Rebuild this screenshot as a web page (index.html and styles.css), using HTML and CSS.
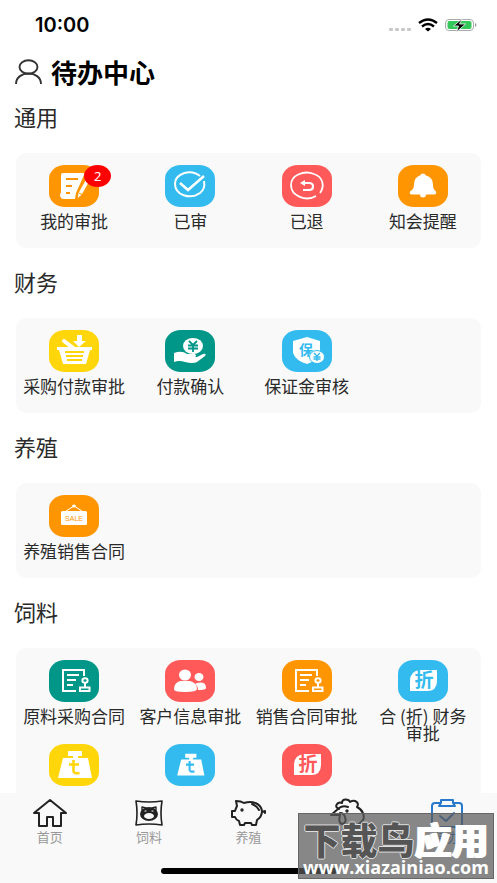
FILE: index.html
```html
<!DOCTYPE html>
<html lang="zh-CN">
<head>
<meta charset="utf-8">
<meta name="viewport" content="width=device-width, initial-scale=1">
<title>待办中心</title>
<link rel="stylesheet" href="styles.css">
</head>
<body>
<svg class="sprite" aria-hidden="true">
  <symbol id="contract" viewBox="0 0 50 42">
    <path d="M27 31H14V10h21v6M18 15h12M18 20h9M18 25h6" fill="none" stroke="#fff" stroke-width="2"/>
    <ellipse cx="36" cy="20.500" rx="2.600" ry="2.300" fill="none" stroke="#fff" stroke-width="2"/>
    <path d="M36 23v4M31 27.500h9.500V31H31z" fill="none" stroke="#fff" stroke-width="2"/>
  </symbol>
  <symbol id="weight" viewBox="0 0 50 42">
    <path d="M19 7h14v5h-4v2h10l4 20H9l5-20h10v-2h-5z" fill="#fff"/>
    <path d="M24.500 16v11q0 3 6 2M20 20.500h10" fill="none" stroke="currentColor" stroke-width="2.600"/>
  </symbol>
  <symbol id="leaf" viewBox="0 0 50 42">
    <path d="M39 10v11q0 10-10 10H12V21q0-10 10-11z" fill="#fff"/>
    <text x="26" y="27" text-anchor="middle" font-size="19" font-weight="700" fill="currentColor">折</text>
  </symbol>
</svg>
<div class="app">
  <header class="status">
    <time>10:00</time>
    <svg width="90" height="20" viewBox="0 0 90 20" role="img" aria-label="信号与电量">
      <g fill="#c8c8c8"><rect x="0" y="13" width="4" height="3" rx="1"/><rect x="6" y="13" width="4" height="3" rx="1"/><rect x="12" y="13" width="4" height="3" rx="1"/><rect x="18" y="13" width="4" height="3" rx="1"/></g>
      <g fill="none" stroke="#000" stroke-width="2.400"><path d="M30 8q9-7 18 0M33 11.500q6-5 12 0"/></g>
      <path d="M36 14q3-2.500 6 0l-3 2.500z"/>
      <rect x="56.500" y="4.500" width="28" height="11" rx="3.500" fill="#fff" stroke="#aaa"/>
      <rect x="58.500" y="6" width="24" height="8" rx="2" fill="#34c759"/>
      <path d="M86 8q3 2 0 4z" fill="#999"/>
      <path d="m73.500 3.500-9 7.500h5l-2 6 9-8h-6z" stroke="#fff" stroke-width=".8"/>
    </svg>
  </header>
  <main>
    <div class="title">
      <svg width="28" height="26" viewBox="0 0 28 26" fill="none" stroke="#333" stroke-width="1.900" aria-hidden="true"><ellipse cx="13.500" cy="8" rx="9" ry="6.800"/><path d="M1 25C1 11 26 11 26 25"/></svg>
      <h1>待办中心</h1>
    </div>

    <h2>通用</h2>
    <section class="card">
      <a class="item" href="#"><span class="tile orange"><svg viewBox="0 0 50 42"><path d="M14 8h20q2 0 1 2l-8 18-1 6H14q-3-1-3-4l1-3V10q0-2 2-2z" fill="#fff"/><path d="M17 14h12M17 21h6M17 28h4" stroke="#ff9500" stroke-width="2.200"/><path d="m38 12 4 2-9 16-5 4 1-6z" fill="#fff" stroke="#ff9500"/><path d="m30 28 4 2" stroke="#ff9500"/></svg><b class="badge">2</b></span><span>我的审批</span></a>
      <a class="item" href="#"><span class="tile blue"><svg viewBox="0 0 50 42" fill="none" stroke="#fff" stroke-width="2"><path d="M35 11C25 3 10 9 10 19c0 11 15 16 25 9 4-3 5-7 4-12"/><path d="m15 18 8 7 16-14" stroke-width="2.500"/></svg></span><span>已审</span></a>
      <a class="item" href="#"><span class="tile red"><svg viewBox="0 0 50 42" fill="none" stroke="#fff" stroke-width="1.800"><path d="M34 31C24 37 9 31 9 20 9 10 22 5 32 9c9 3 11 12 6 19"/><path d="M20 18h7q4 0 4 3.500t-4 3.500h-6" stroke-width="2.200"/><path d="m18 18 5-3v6z" fill="#fff" stroke="none"/></svg></span><span>已退</span></a>
      <a class="item" href="#"><span class="tile orange"><svg viewBox="0 0 50 42" fill="#fff"><path d="M25 8.500q2 0 3 2 7 2 7 9 0 5 3 7 1 3-2 3h-8q0 3-3 3t-3-3h-8q-3 0-2-3 4-2 4-7 0-7 6-9 1-2 3-2z"/></svg></span><span>知会提醒</span></a>
    </section>

    <h2>财务</h2>
    <section class="card">
      <a class="item" href="#"><span class="tile yellow"><svg viewBox="0 0 50 42"><path d="M8 17h35v3h-2l-4 14H14l-4-14H8z" fill="#fff"/><path d="m15 11 12 9" stroke="#fff" stroke-width="4" stroke-linecap="round"/><path d="M28 5h5v6h4l-7 6-6-6h4z" fill="#fff"/><path d="M16 22h19M17 26h17M18 30h15" stroke="#ffd60a" stroke-width="1.800"/></svg></span><span>采购付款审批</span></a>
      <a class="item" href="#"><span class="tile green"><svg viewBox="0 0 50 42"><ellipse cx="28" cy="16" rx="10" ry="8" fill="#fff"/><path d="m24 11 4 4 4-4M23 15.500h10M23 18.500h10M28 15v7" fill="none" stroke="#009688" stroke-width="1.800"/><path d="M9 23q8-3 13 1h8q2 2 0 3h-7 9l6-3q4-1 2 2l-8 6q-4 2-12 0-6-2-11 0z" fill="#fff"/></svg></span><span>付款确认</span></a>
      <a class="item" href="#"><span class="tile blue"><svg viewBox="0 0 50 42"><path d="m25 7 13 4v12q-3 8-13 11-11-3-14-11V11z" fill="#fff"/><text x="24" y="25" text-anchor="middle" font-size="14" font-weight="700" fill="#33bbef">保</text><ellipse cx="35" cy="27" rx="7.500" ry="6.500" fill="#fff" stroke="#33bbef"/><path d="m32 23 3 3 3-3M31.500 27h7M31.500 29h7M35 26v5" fill="none" stroke="#33bbef" stroke-width="1.400"/></svg></span><span>保证金审核</span></a>
    </section>

    <h2>养殖</h2>
    <section class="card">
      <a class="item" href="#"><span class="tile orange"><svg viewBox="0 0 50 42"><rect x="12" y="16" width="26" height="14" rx="1.500" fill="#fff"/><path d="m17 16 8-5 8 5" fill="none" stroke="#fff"/><ellipse cx="25" cy="11" rx="2" ry="1.500" fill="#fff"/><text class="latin" x="25" y="26" text-anchor="middle" font-size="7" fill="#ff9500">SALE</text></svg></span><span>养殖销售合同</span></a>
    </section>

    <h2>饲料</h2>
    <section class="card">
      <a class="item" href="#"><span class="tile green"><svg><use href="#contract"/></svg></span><span>原料采购合同</span></a>
      <a class="item" href="#"><span class="tile red"><svg viewBox="0 0 50 42" fill="#fff"><ellipse cx="34" cy="17" rx="4.500" ry="4"/><path d="M32 23q9-2 9 5 0 2-8 2 0-4-3-6z"/><ellipse cx="20" cy="15" rx="6" ry="5.500"/><path d="M15 21h10q7 2 7 8 0 3-12 3T9 29q0-6 6-8z"/></svg></span><span>客户信息审批</span></a>
      <a class="item" href="#"><span class="tile orange"><svg><use href="#contract"/></svg></span><span>销售合同审批</span></a>
      <a class="item" href="#"><span class="tile blue"><svg><use href="#leaf"/></svg></span><span>合 (折) 财务<br>审批</span></a>
      <a class="item" href="#"><span class="tile yellow"><svg><use href="#weight"/></svg></span></a>
      <a class="item" href="#"><span class="tile blue small"><svg><use href="#weight"/></svg></span></a>
      <a class="item" href="#"><span class="tile red"><svg><use href="#leaf"/></svg></span></a>
    </section>
  </main>
  <nav class="tabs">
    <a href="#"><svg viewBox="0 0 36 30"><path d="M2 15 18 2l16 13h-5v13h-8v-9h-6v9H7V15z"/></svg><span>首页</span></a>
    <a href="#"><svg viewBox="0 0 36 30"><path d="M5 3q13 2 26 0-2 12 0 24-13-2-26 0 2-12 0-24z" stroke-width="1.600"/><ellipse cx="18" cy="16" rx="8" ry="6" fill="#222"/><path d="M11 12V9l4 1M25 12V9l-4 1" stroke-width="1.400"/><ellipse cx="18" cy="18" rx="5" ry="3" fill="#f9f9f9" stroke="none"/><path d="M14 13h1M21 13h1" stroke="#fff" stroke-width="1.200"/></svg><span>饲料</span></a>
    <a href="#"><svg viewBox="0 0 36 30"><path d="M7 8 6 3q5 0 8 2c9-3 17 1 18 8 0 4-2 7-5 9l-1 5h-4l-1-2h-6l-1 2h-4l-1-4q-3-1-4-4H2v-6h3q1-3 2-5zM22 6q5 2 7 6M32 14l3-1v2"/><circle cx="12" cy="12" r=".7" fill="#222"/></svg><span>养殖</span></a>
    <a href="#" aria-label="禽类"><svg viewBox="0 0 36 30"><path d="M9 11C3 9 8 3 12 5c0-5 7-4 8-1 5-3 10 1 7 5 6 3 8 9 6 13q-2 3-7 6M8 11l-7 6h9M9 10q4-3 9-1M10 17q-2 8 2 9 5-1 3-7-1-4-5-4"/><circle cx="17" cy="13" r=".7" fill="#222"/></svg></a>
    <a class="active" href="#"><svg viewBox="0 0 36 30"><path d="M11 5H6q-3 0-3 3v18q0 3 3 3h24q3 0 3-3V8q0-3-3-3h-5M12 2h12v3l2 3H10l2-3zM11 18l6 5 8-8"/></svg><span>待办</span></a>
    <i class="home-bar"></i>
  </nav>
  <aside class="mark"><strong>下载鸟<em>应用</em></strong><span>www.xiazainiao.com</span></aside>
</div>
</body>
</html>
```
FILE: styles.css
```css
* { box-sizing: border-box; }
body { margin: 0; background: #fff; color: #2a2a2a; font-family: "Noto Sans", "Noto Sans CJK SC", sans-serif; }
a { color: inherit; text-decoration: none; }
.sprite { position: absolute; width: 0; height: 0; }
.app { position: relative; display: flex; flex-direction: column; height: 100vh; overflow: hidden; }
.status { display: flex; align-items: center; justify-content: space-between; height: 50px; padding: 0 18px 0 35px; color: #000; }
.status time { font: 600 20px/28px Inter, sans-serif; }
main { flex: 1; min-height: 0; overflow: hidden; padding: 0 16px 0 15px; }
.title { display: flex; align-items: center; gap: 8px; height: 44px; }
h1 { margin: 0; color: #000; font: 700 26px/36px "Noto Sans CJK SC", sans-serif; }
h2 { margin: 0 0 21px; font: 400 22px/32px "Noto Sans CJK SC", sans-serif; text-indent: -1px; }
.title + h2 { margin-top: 6px; }
.card { display: grid; grid-template-columns: repeat(4, 1fr); row-gap: 3px; margin: 0 0 17px 1px; padding: 12px 0 19px; border-radius: 10px; background: #f9f9f9; }
.item { display: flex; flex-direction: column; align-items: center; gap: 5px; font: 400 17px/17px "Noto Sans CJK SC", sans-serif; text-align: center; white-space: nowrap; }
.tile { position: relative; width: 50px; height: 42px; border-radius: 16px / 14px; }
.tile svg { display: block; width: 50px; height: 42px; }
.orange { background: #ff9500; color: #ff9500; }
.blue { background: #33bbef; color: #33bbef; }
.red { background: #ff5959; color: #ff5959; }
.yellow { background: #ffd60a; color: #ffd60a; }
.green { background: #009688; color: #009688; }
.small { padding: 4px 5px; }
.small svg { width: 40px; height: 34px; }
.latin { font-family: "Liberation Sans", sans-serif; }
.badge { position: absolute; top: 0; right: -12px; width: 27px; height: 22px; border-radius: 50%; background: red; color: #fff; font: 400 13px/22px "Noto Sans", sans-serif; }
.tabs { position: relative; display: grid; grid-template-columns: repeat(5, 1fr); height: 90px; padding-top: 5px; background: #f9f9f9; }
.tabs a { display: flex; flex-direction: column; align-items: center; gap: 1px; color: #999; font: 400 13px/16px "Noto Sans CJK SC", sans-serif; }
.tabs svg { width: 36px; height: 30px; fill: none; stroke: #222; stroke-width: 2; stroke-linejoin: round; stroke-linecap: round; }
.tabs .active { color: #2878cc; }
.tabs .active svg { stroke: #2878cc; }
.home-bar { position: absolute; bottom: 9px; left: 50%; width: 176px; height: 6px; margin-left: -88px; border-radius: 3px; background: #000; }
.mark { position: absolute; right: 3px; bottom: 4px; display: flex; flex-direction: column; align-items: center; width: 196px; height: 66px; padding-top: 6px; border: 1px solid #666; background: rgba(90, 90, 90, .72); color: #fff; white-space: nowrap; }
.mark strong { color: #555; font: 900 37px/38px "Noto Sans CJK SC", sans-serif; text-shadow: 1px 0 #ddd, -1px 0 #ddd, 0 1px #ddd, 0 -1px #ddd; }
.mark em { color: #fff; font-style: normal; text-shadow: 1px 0 #fff, -1px 0 #fff; }
.mark span { font: 700 18px/19px "Open Sans", sans-serif; }
```
